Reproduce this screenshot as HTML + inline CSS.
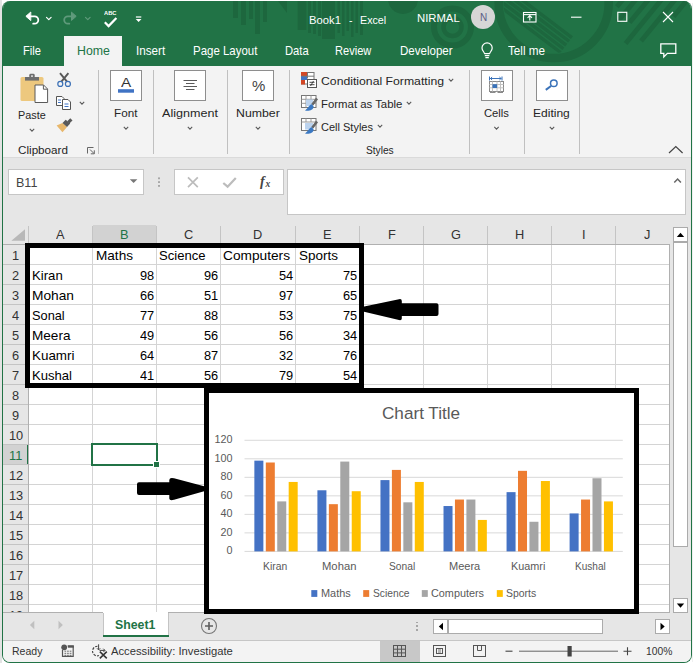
<!DOCTYPE html>
<html lang="en"><head><meta charset="utf-8"><title>Book1 - Excel</title>
<style>
html,body{margin:0;padding:0;}
body{width:695px;height:667px;background:#fff;position:relative;overflow:hidden;font-family:"Liberation Sans", sans-serif;}
#w div,#w svg{position:absolute;}
#w{position:absolute;left:0;top:0;width:695px;height:667px;overflow:hidden;}
.t{position:absolute;white-space:nowrap;transform-origin:0 0;display:block;}
</style></head><body><div id="w">
<div style="left:0px;top:0px;width:2px;height:663px;background:#e3e3e3;"></div>
<div style="left:692px;top:3px;width:1px;height:659px;background:#f0f0f0;"></div>
<div style="left:2px;top:1px;width:688px;height:661px;border:1px solid #217346;border-top:none;border-radius:8px;background:#e6e6e6;overflow:hidden;"><div style="left:-1px;top:0;width:690px;height:65px;background:#217346;"></div><svg style="left:-1px;top:0px;" width="690" height="65" viewBox="2 1 690 65"><g fill="#1d673e"><rect x="233" y="1" width="5" height="17"/><rect x="241" y="1" width="5" height="24"/><rect x="249" y="1" width="4" height="18"/><rect x="255" y="1" width="5" height="33"/><rect x="263" y="1" width="4" height="21"/><polygon points="278,1 287,1 287,13"/><rect x="297.700" y="1" width="8.600" height="29"/><rect x="308" y="1" width="3" height="32"/><rect x="313" y="1" width="3" height="33"/><rect x="318" y="1" width="3" height="35"/><rect x="322" y="1" width="13" height="38"/><rect x="337.500" y="1" width="2.500" height="32"/><rect x="342" y="1" width="2.500" height="35"/><rect x="346.500" y="1" width="2.500" height="30"/><rect x="351" y="1" width="2.500" height="36"/><rect x="355.500" y="1" width="2.500" height="32"/><rect x="360" y="1" width="3" height="34"/></g><circle cx="403" cy="-1" r="15" fill="#1d673e"/><g fill="none" stroke="#1d673e"><circle cx="452.5" cy="27" r="9" stroke-width="4.5"/><circle cx="452.5" cy="27" r="18.5" stroke-width="6"/><circle cx="553.7" cy="3" r="55" stroke-width="8.5"/></g><clipPath id="cpr"><circle cx="553.7" cy="3" r="50"/></clipPath><g stroke="#1d673e" stroke-width="3.3" clip-path="url(#cpr)"><line x1="494.8" y1="-21.0" x2="571.9" y2="37.6"/><line x1="491.9" y1="-17.3" x2="569.1" y2="41.3"/><line x1="489.1" y1="-13.5" x2="566.2" y2="45.1"/><line x1="486.3" y1="-9.8" x2="563.4" y2="48.8"/><line x1="483.4" y1="-6.1" x2="560.6" y2="52.5"/></g><g stroke="#1d673e" stroke-width="4.8"><line x1="624.1" y1="-2" x2="616.9" y2="6.8"/><line x1="637.1" y1="-2" x2="617.4" y2="22"/><line x1="649.8" y1="-2" x2="629.6" y2="22.6"/><line x1="662.8" y1="-2" x2="625.6" y2="43.4"/><line x1="676.4" y1="-2" x2="641.1" y2="41"/><line x1="688.7" y1="-2" x2="673.6" y2="16.4"/></g></svg></div>
<svg style="left:20px;top:8px;" width="130" height="24" viewBox="20 8 130 24" fill="none" stroke="#fff" stroke-linecap="round" stroke-linejoin="round"><path d="M30.500 12.300 L25.900 16.300 L30.500 20.300 Z" fill="#fff" stroke-width="1"/><path d="M29 16.300 H34.600 a3.700 3.700 0 0 1 0 7.400 H33.200" stroke-width="1.800"/><path d="M46.500 17.300 l2.300 2.300 l2.300 -2.300" stroke-width="1.200"/><g stroke="#5f9a7b"><path d="M71.800 12.400 L76.200 16.300 L71.800 20.200 Z" fill="#5f9a7b" stroke-width="1"/><path d="M73.500 16.300 H67.900 a3.700 3.700 0 0 0 0 7.400 H69.300" stroke-width="1.800"/><path d="M85.500 17.300 l2.300 2.300 l2.300 -2.300" stroke-width="1.200"/></g><path d="M104.800 22.300 l3.800 3.800 l7.800 -8" stroke-width="2.200" stroke-linecap="butt" stroke-linejoin="miter"/><path d="M135.900 17 h5.400" stroke-width="1.200" stroke-linecap="butt"/><path d="M135.700 19 h5.800 l-2.900 3.100 z" fill="#fff" stroke="none"/></svg>
<span class="t" style="left:103.60px;top:10px;font-size:6.2px;line-height:6.2px;color:#fff;font-weight:bold;transform:scaleX(0.9249);">ABC</span>
<span class="t" style="left:309.30px;top:15px;font-size:11.8px;line-height:11.8px;color:#fff;transform:scaleX(0.9536);">Book1</span>
<span class="t" style="left:348.93px;top:15px;font-size:11.8px;line-height:11.8px;color:#fff;transform:scaleX(0.9000);">-</span>
<span class="t" style="left:359.60px;top:15px;font-size:11.8px;line-height:11.8px;color:#fff;transform:scaleX(0.9079);">Excel</span>
<span class="t" style="left:416.90px;top:13px;font-size:11.8px;line-height:11.8px;color:#fff;transform:scaleX(0.9579);">NIRMAL</span>
<div style="left:471px;top:5px;width:24px;height:24px;border-radius:12px;background:#d6d6d6;"></div>
<span class="t" style="left:479.60px;top:13px;font-size:10.2px;line-height:10.2px;color:#5c5f86;transform:scaleX(0.9783);">N</span>
<svg style="left:515px;top:5px;" width="170" height="26" viewBox="515 5 170 26" fill="none" stroke="#fff" stroke-width="1.1"><rect x="523.5" y="12.5" width="12.5" height="9.5"/><path d="M523.5 14.6 h12.5" /><path d="M529.8 20.5 v-4.6 M527.6 17.8 l2.2 -2.2 l2.2 2.2"/><path d="M571 17.2 h10.5"/><rect x="617.8" y="12.3" width="9" height="9"/><path d="M663 12 l10 10 M673 12 l-10 10"/></svg>
<div style="left:64px;top:36px;width:58px;height:30px;background:#f3f3f3;"></div>
<span class="t" style="left:23.30px;top:45px;font-size:12.7px;line-height:12.7px;color:#fff;transform:scaleX(0.8752);">File</span>
<span class="t" style="left:76.80px;top:45px;font-size:12.7px;line-height:12.7px;color:#217346;transform:scaleX(0.9721);">Home</span>
<span class="t" style="left:136.00px;top:45px;font-size:12.7px;line-height:12.7px;color:#fff;transform:scaleX(0.9201);">Insert</span>
<span class="t" style="left:192.60px;top:45px;font-size:12.7px;line-height:12.7px;color:#fff;transform:scaleX(0.9039);">Page Layout</span>
<span class="t" style="left:284.50px;top:45px;font-size:12.7px;line-height:12.7px;color:#fff;transform:scaleX(0.8839);">Data</span>
<span class="t" style="left:335.20px;top:45px;font-size:12.7px;line-height:12.7px;color:#fff;transform:scaleX(0.8724);">Review</span>
<span class="t" style="left:399.60px;top:45px;font-size:12.7px;line-height:12.7px;color:#fff;transform:scaleX(0.9093);">Developer</span>
<span class="t" style="left:508.20px;top:45px;font-size:12.7px;line-height:12.7px;color:#fff;transform:scaleX(0.9232);">Tell me</span>
<svg style="left:478px;top:40px;" width="20" height="22" viewBox="478 40 20 22" fill="none" stroke="#fff" stroke-width="1.2"><path d="M484.6 53.6 c-0.4 -1.6 -2.6 -3 -2.6 -5.6 a5.1 5.1 0 0 1 10.2 0 c0 2.6 -2.2 4 -2.6 5.6 z"/><path d="M484.8 55.6 h4.6 M485.4 57.7 h3.4"/></svg>
<svg style="left:656px;top:40px;" width="24" height="22" viewBox="656 40 24 22" fill="none" stroke="#fff" stroke-width="1.3"><path d="M660.8 43.8 h15 v9.6 h-8.4 l-3.6 3.6 v-3.6 h-3 z"/></svg>
<div style="left:3px;top:66px;width:688px;height:91px;background:#f3f3f3;"></div>
<div style="left:3px;top:157px;width:688px;height:1px;background:#dadada;"></div>
<div style="left:98px;top:70px;width:1px;height:84px;background:#c0c0c0;"></div>
<div style="left:153px;top:70px;width:1px;height:84px;background:#c0c0c0;"></div>
<div style="left:227px;top:70px;width:1px;height:84px;background:#c0c0c0;"></div>
<div style="left:289px;top:70px;width:1px;height:84px;background:#c0c0c0;"></div>
<div style="left:469px;top:70px;width:1px;height:84px;background:#c0c0c0;"></div>
<div style="left:524px;top:70px;width:1px;height:84px;background:#c0c0c0;"></div>
<div style="left:579px;top:70px;width:1px;height:84px;background:#c0c0c0;"></div>
<div style="left:110px;top:70px;width:30px;height:29px;border:1px solid #8e8e8e;background:#fff;"></div>
<div style="left:174px;top:70px;width:30px;height:29px;border:1px solid #8e8e8e;background:#fff;"></div>
<div style="left:242px;top:70px;width:30px;height:29px;border:1px solid #8e8e8e;background:#fff;"></div>
<div style="left:481px;top:70px;width:30px;height:29px;border:1px solid #8e8e8e;background:#fff;"></div>
<div style="left:536px;top:70px;width:30px;height:29px;border:1px solid #8e8e8e;background:#fff;"></div>
<svg style="left:3px;top:66px;" width="688" height="92" viewBox="3 66 688 92"><rect x="20.5" y="77" width="23" height="24" rx="1.5" fill="#edc87e"/><rect x="25" y="77" width="14" height="3.600" fill="#6e6e6e"/><path d="M29.300 77.500 v-2.300 a1.400 1.400 0 0 1 1.400 -1.400 h2.600 a1.400 1.400 0 0 1 1.400 1.400 v2.300 z" fill="#6e6e6e"/><rect x="31.200" y="75.300" width="1.600" height="1.600" fill="#f3f3f3"/><path d="M35 85 h8.6 l4 4 v13.5 h-12.6 z" fill="#fff" stroke="#5a5a5a" stroke-width="1"/><path d="M43.4 85.2 v4 h4" fill="none" stroke="#5a5a5a" stroke-width="1"/><path d="M60 73.200 l7 8.400 M68.400 73.200 l-7 8.400" stroke="#585858" stroke-width="1.900" fill="none"/><circle cx="60.300" cy="83.900" r="2.500" fill="#f3f3f3" stroke="#3a6fb5" stroke-width="1.200"/><circle cx="67.900" cy="83.900" r="2.500" fill="#f3f3f3" stroke="#3a6fb5" stroke-width="1.200"/><path d="M56.5 96.5 h5.5 l2 2 v7 h-7.5 z" fill="#fff" stroke="#555" stroke-width="1"/><path d="M62.5 99.5 h5.5 l2.5 2.5 v7.5 h-8 z" fill="#fff" stroke="#555" stroke-width="1"/><path d="M58 100 h3 M58 102.5 h3 M64.5 104 h4 M64.5 106.5 h4" stroke="#3f73c4" stroke-width="1"/><path d="M79.8 101.9 l2.2 2.2 l2.2 -2.2" stroke="#5a5a5a" stroke-width="1.1" fill="none"/><polygon points="56.600,125.600 62.500,132.300 67,126.900 62.500,123" fill="#e8b76b"/><polygon points="62.500,123 67,126.900 70.200,123.600 65.700,119.800" fill="#595959"/><path d="M68.300 122.300 L71.400 119.400" stroke="#595959" stroke-width="3.200"/><path d="M87.5 153.5 v-6 h6" fill="none" stroke="#666" stroke-width="1"/><path d="M90 149.5 l4 4 M94.3 150.3 v3.5 h-3.5" fill="none" stroke="#666" stroke-width="1"/><path d="M29.8 128.9 l2.2 2.2 l2.2 -2.2" stroke="#5a5a5a" stroke-width="1.1" fill="none"/><path d="M123.8 126.9 l2.2 2.2 l2.2 -2.2" stroke="#5a5a5a" stroke-width="1.1" fill="none"/><path d="M187.8 126.9 l2.2 2.2 l2.2 -2.2" stroke="#5a5a5a" stroke-width="1.1" fill="none"/><path d="M255.8 126.9 l2.2 2.2 l2.2 -2.2" stroke="#5a5a5a" stroke-width="1.1" fill="none"/><path d="M494.3 126.9 l2.2 2.2 l2.2 -2.2" stroke="#5a5a5a" stroke-width="1.1" fill="none"/><path d="M549.8 126.9 l2.2 2.2 l2.2 -2.2" stroke="#5a5a5a" stroke-width="1.1" fill="none"/><path d="M448.8 78.9 l2.2 2.2 l2.2 -2.2" stroke="#5a5a5a" stroke-width="1.1" fill="none"/><path d="M406.8 101.9 l2.2 2.2 l2.2 -2.2" stroke="#5a5a5a" stroke-width="1.1" fill="none"/><path d="M377.8 124.9 l2.2 2.2 l2.2 -2.2" stroke="#5a5a5a" stroke-width="1.1" fill="none"/><rect x="118" y="89.2" width="16" height="3.5" fill="#3f73c4"/><path d="M183.500 80.500 h13.500 M186 83.500 h8.500 M183.500 86.500 h13.500 M186 89.500 h8.500" stroke="#5a5a5a" stroke-width="1"/><rect x="301.5" y="72.5" width="12.5" height="11.5" fill="#fff" stroke="#777" stroke-width="1"/><rect x="301" y="72" width="6" height="4" fill="#d24726"/><rect x="301" y="76" width="6" height="4" fill="#3f73c4"/><rect x="301" y="80" width="4" height="4.5" fill="#d24726"/><path d="M307.5 72.5 v6 M301.5 76.2 h12.5" stroke="#777" stroke-width="1"/><rect x="307.5" y="79.5" width="9" height="8" fill="#fff" stroke="#555" stroke-width="1"/><path d="M309.5 82.3 h5 M309.5 84.7 h5 M313.5 81 l-3 5" stroke="#333" stroke-width="0.9"/><rect x="301.5" y="95.5" width="14.500" height="12" fill="#fff" stroke="#777" stroke-width="1"/><path d="M301.5 99.300 h14.500 M301.5 103.300 h14.500 M306 95.5 v12 M311 95.5 v12" stroke="#999" stroke-width="1"/><rect x="306" y="99.500" width="7" height="6.500" fill="#bcd3ee"/><path d="M317 98.500 l-4.700 6.200" stroke="#666" stroke-width="2.600"/><path d="M311.800 104.300 c-2.500 0.300 -3.500 3.500 -6.800 6.300 c4.500 0.800 8.200 -0.800 8.700 -4.200 z" fill="#3a78c2"/><rect x="301.5" y="118.5" width="14.500" height="12" fill="#fff" stroke="#777" stroke-width="1"/><path d="M301.5 122 h14.500 M306 118.5 v3.5 M311 118.5 v3.5" stroke="#999" stroke-width="1"/><rect x="305" y="123" width="8" height="6.500" fill="#bcd3ee"/><path d="M317 121.500 l-4.700 6.200" stroke="#666" stroke-width="2.600"/><path d="M311.800 127.300 c-2.500 0.300 -3.500 3.500 -6.800 6.300 c4.500 0.800 8.200 -0.800 8.700 -4.200 z" fill="#3a78c2"/><path d="M490 78.500 h11.500 M489.500 76.500 v4 M502 76.500 v4 M490.500 78.500 l1.600 -1.500 M490.500 78.500 l1.600 1.500 M501 78.500 l-1.600 -1.500 M501 78.500 l-1.600 1.500" stroke="#3b73b9" stroke-width="1" fill="none"/><rect x="489.500" y="81.500" width="14" height="10" fill="#fff" stroke="#8a8a8a" stroke-width="1"/><path d="M489.500 84.500 h14 M489.500 87.800 h14 M492.500 81.500 v10 M497 81.500 v10 M500.500 81.500 v10" stroke="#c2c2c2" stroke-width="1"/><rect x="492.500" y="84.200" width="4.600" height="3.800" fill="#3b73b9"/><path d="M490 92.500 h5.500 M497.500 92.500 h5.500" stroke="#8a8a8a" stroke-width="1"/><circle cx="553.800" cy="83.300" r="3.300" fill="none" stroke="#3b73b9" stroke-width="1.500"/><path d="M551 86 l-5.200 3.900" stroke="#3b73b9" stroke-width="2"/><path d="M669 153 l6.800 -6.500 l6.800 6.500" fill="none" stroke="#444" stroke-width="1.200"/></svg>
<span class="t" style="left:121.20px;top:76px;font-size:13.4px;line-height:13.4px;color:#333;transform:scaleX(1.1413);">A</span>
<span class="t" style="left:251.70px;top:78px;font-size:15px;line-height:15px;color:#444;transform:scaleX(0.9967);">%</span>
<span class="t" style="left:18.40px;top:109px;font-size:11.7px;line-height:11.7px;color:#262626;transform:scaleX(0.9267);">Paste</span>
<span class="t" style="left:17.60px;top:144px;font-size:11.7px;line-height:11.7px;color:#262626;transform:scaleX(0.9994);">Clipboard</span>
<span class="t" style="left:114.40px;top:107px;font-size:11.7px;line-height:11.7px;color:#262626;transform:scaleX(1.0004);">Font</span>
<span class="t" style="left:162.10px;top:107px;font-size:11.7px;line-height:11.7px;color:#262626;transform:scaleX(1.0753);">Alignment</span>
<span class="t" style="left:236.40px;top:107px;font-size:11.7px;line-height:11.7px;color:#262626;transform:scaleX(1.0534);">Number</span>
<span class="t" style="left:320.70px;top:75px;font-size:11.7px;line-height:11.7px;color:#262626;transform:scaleX(1.0460);">Conditional Formatting</span>
<span class="t" style="left:320.70px;top:98px;font-size:11.7px;line-height:11.7px;color:#262626;transform:scaleX(0.9738);">Format as Table</span>
<span class="t" style="left:320.70px;top:121px;font-size:11.7px;line-height:11.7px;color:#262626;transform:scaleX(0.9417);">Cell Styles</span>
<span class="t" style="left:365.60px;top:144px;font-size:11.7px;line-height:11.7px;color:#262626;transform:scaleX(0.8703);">Styles</span>
<span class="t" style="left:484.30px;top:107px;font-size:11.7px;line-height:11.7px;color:#262626;transform:scaleX(0.9621);">Cells</span>
<span class="t" style="left:533.20px;top:107px;font-size:11.7px;line-height:11.7px;color:#262626;transform:scaleX(1.0294);">Editing</span>
<div style="left:8px;top:169px;width:134px;height:24px;border:1px solid #c6c6c6;background:#fff;"></div>
<div style="left:174px;top:169px;width:108px;height:24px;border:1px solid #c6c6c6;background:#fff;"></div>
<div style="left:287px;top:169px;width:397px;height:44px;border:1px solid #c6c6c6;background:#fff;"></div>
<span class="t" style="left:15.60px;top:177px;font-size:12.6px;line-height:12.6px;color:#444;transform:scaleX(0.9961);">B11</span>
<svg style="left:125px;top:170px;" width="565" height="30" viewBox="125 170 565 30"><path d="M129.800 179.300 h7.600 l-3.800 3.800 z" fill="#777"/><rect x="158.100" y="177.400" width="1.800" height="1.800" fill="#a0a0a0"/><rect x="158.100" y="181.200" width="1.800" height="1.800" fill="#a0a0a0"/><rect x="158.100" y="185" width="1.800" height="1.800" fill="#a0a0a0"/><path d="M188 177.300 l9.800 9.800 M197.800 177.300 l-9.800 9.800" stroke="#bcbcbc" stroke-width="1.700" fill="none"/><path d="M223.300 183 l4.300 3.700 l8.200 -8.800" stroke="#bcbcbc" stroke-width="2.200" fill="none"/><path d="M674.300 182.600 l3.300 -3.500 l3.300 3.500" stroke="#666" stroke-width="1.500" fill="none"/></svg>
<span class="t" style="left:260.00px;top:175px;font-size:14px;line-height:14px;color:#444;font-weight:bold;font-style:italic;font-family:Liberation Serif, serif;">f</span>
<span class="t" style="left:265.50px;top:180px;font-size:9.5px;line-height:9.5px;color:#444;font-weight:bold;font-style:italic;font-family:Liberation Serif, serif;">x</span>
<div style="left:29px;top:245px;width:641px;height:368px;background:#fff;"></div>
<div style="left:3px;top:225px;width:667px;height:19px;background:#e6e6e6;"></div>
<div style="left:3px;top:245px;width:25px;height:368px;background:#e6e6e6;"></div>
<div style="left:93px;top:225px;width:63px;height:19px;background:#d2d2d2;"></div>
<div style="left:3px;top:445px;width:25px;height:19px;background:#d2d2d2;"></div>
<div style="left:93px;top:243px;width:64px;height:2px;background:#217346;"></div>
<div style="left:27px;top:444px;width:2px;height:21px;background:#217346;"></div>
<div style="left:3px;top:244px;width:667px;height:1px;background:#b0b0b0;"></div>
<div style="left:28px;top:245px;width:1px;height:368px;background:#b0b0b0;"></div>
<div style="left:92px;top:226px;width:1px;height:18px;background:#c4c4c4;"></div>
<div style="left:92px;top:245px;width:1px;height:368px;background:#d4d4d4;"></div>
<div style="left:156px;top:226px;width:1px;height:18px;background:#c4c4c4;"></div>
<div style="left:156px;top:245px;width:1px;height:368px;background:#d4d4d4;"></div>
<div style="left:220px;top:226px;width:1px;height:18px;background:#c4c4c4;"></div>
<div style="left:220px;top:245px;width:1px;height:368px;background:#d4d4d4;"></div>
<div style="left:295px;top:226px;width:1px;height:18px;background:#c4c4c4;"></div>
<div style="left:295px;top:245px;width:1px;height:368px;background:#d4d4d4;"></div>
<div style="left:359px;top:226px;width:1px;height:18px;background:#c4c4c4;"></div>
<div style="left:359px;top:245px;width:1px;height:368px;background:#d4d4d4;"></div>
<div style="left:423px;top:226px;width:1px;height:18px;background:#c4c4c4;"></div>
<div style="left:423px;top:245px;width:1px;height:368px;background:#d4d4d4;"></div>
<div style="left:487px;top:226px;width:1px;height:18px;background:#c4c4c4;"></div>
<div style="left:487px;top:245px;width:1px;height:368px;background:#d4d4d4;"></div>
<div style="left:551px;top:226px;width:1px;height:18px;background:#c4c4c4;"></div>
<div style="left:551px;top:245px;width:1px;height:368px;background:#d4d4d4;"></div>
<div style="left:615px;top:226px;width:1px;height:18px;background:#c4c4c4;"></div>
<div style="left:615px;top:245px;width:1px;height:368px;background:#d4d4d4;"></div>
<div style="left:28px;top:226px;width:1px;height:18px;background:#c4c4c4;"></div>
<div style="left:29px;top:264px;width:641px;height:1px;background:#d4d4d4;"></div>
<div style="left:3px;top:264px;width:25px;height:1px;background:#c4c4c4;"></div>
<div style="left:29px;top:284px;width:641px;height:1px;background:#d4d4d4;"></div>
<div style="left:3px;top:284px;width:25px;height:1px;background:#c4c4c4;"></div>
<div style="left:29px;top:304px;width:641px;height:1px;background:#d4d4d4;"></div>
<div style="left:3px;top:304px;width:25px;height:1px;background:#c4c4c4;"></div>
<div style="left:29px;top:324px;width:641px;height:1px;background:#d4d4d4;"></div>
<div style="left:3px;top:324px;width:25px;height:1px;background:#c4c4c4;"></div>
<div style="left:29px;top:344px;width:641px;height:1px;background:#d4d4d4;"></div>
<div style="left:3px;top:344px;width:25px;height:1px;background:#c4c4c4;"></div>
<div style="left:29px;top:364px;width:641px;height:1px;background:#d4d4d4;"></div>
<div style="left:3px;top:364px;width:25px;height:1px;background:#c4c4c4;"></div>
<div style="left:29px;top:384px;width:641px;height:1px;background:#d4d4d4;"></div>
<div style="left:3px;top:384px;width:25px;height:1px;background:#c4c4c4;"></div>
<div style="left:29px;top:404px;width:641px;height:1px;background:#d4d4d4;"></div>
<div style="left:3px;top:404px;width:25px;height:1px;background:#c4c4c4;"></div>
<div style="left:29px;top:424px;width:641px;height:1px;background:#d4d4d4;"></div>
<div style="left:3px;top:424px;width:25px;height:1px;background:#c4c4c4;"></div>
<div style="left:29px;top:444px;width:641px;height:1px;background:#d4d4d4;"></div>
<div style="left:3px;top:444px;width:25px;height:1px;background:#c4c4c4;"></div>
<div style="left:29px;top:464px;width:641px;height:1px;background:#d4d4d4;"></div>
<div style="left:3px;top:464px;width:25px;height:1px;background:#c4c4c4;"></div>
<div style="left:29px;top:484px;width:641px;height:1px;background:#d4d4d4;"></div>
<div style="left:3px;top:484px;width:25px;height:1px;background:#c4c4c4;"></div>
<div style="left:29px;top:504px;width:641px;height:1px;background:#d4d4d4;"></div>
<div style="left:3px;top:504px;width:25px;height:1px;background:#c4c4c4;"></div>
<div style="left:29px;top:524px;width:641px;height:1px;background:#d4d4d4;"></div>
<div style="left:3px;top:524px;width:25px;height:1px;background:#c4c4c4;"></div>
<div style="left:29px;top:544px;width:641px;height:1px;background:#d4d4d4;"></div>
<div style="left:3px;top:544px;width:25px;height:1px;background:#c4c4c4;"></div>
<div style="left:29px;top:564px;width:641px;height:1px;background:#d4d4d4;"></div>
<div style="left:3px;top:564px;width:25px;height:1px;background:#c4c4c4;"></div>
<div style="left:29px;top:584px;width:641px;height:1px;background:#d4d4d4;"></div>
<div style="left:3px;top:584px;width:25px;height:1px;background:#c4c4c4;"></div>
<div style="left:29px;top:604px;width:641px;height:1px;background:#d4d4d4;"></div>
<div style="left:3px;top:604px;width:25px;height:1px;background:#c4c4c4;"></div>
<div style="left:669px;top:245px;width:1px;height:368px;background:#b0b0b0;"></div>
<svg style="left:10px;top:227px;" width="16" height="16" viewBox="10 227 16 16"><path d="M25 229.300 v11.400 h-13.600 z" fill="#b8b8b8"/></svg>
<span class="t" style="left:56.23px;top:228px;font-size:13.2px;line-height:13.2px;color:#333;transform:scaleX(0.9700);">A</span>
<span class="t" style="left:120.23px;top:228px;font-size:13.2px;line-height:13.2px;color:#217346;transform:scaleX(0.9700);">B</span>
<span class="t" style="left:183.88px;top:228px;font-size:13.2px;line-height:13.2px;color:#333;transform:scaleX(0.9700);">C</span>
<span class="t" style="left:253.38px;top:228px;font-size:13.2px;line-height:13.2px;color:#333;transform:scaleX(0.9700);">D</span>
<span class="t" style="left:323.23px;top:228px;font-size:13.2px;line-height:13.2px;color:#333;transform:scaleX(0.9700);">E</span>
<span class="t" style="left:387.59px;top:228px;font-size:13.2px;line-height:13.2px;color:#333;transform:scaleX(0.9700);">F</span>
<span class="t" style="left:450.52px;top:228px;font-size:13.2px;line-height:13.2px;color:#333;transform:scaleX(0.9700);">G</span>
<span class="t" style="left:514.88px;top:228px;font-size:13.2px;line-height:13.2px;color:#333;transform:scaleX(0.9700);">H</span>
<span class="t" style="left:581.72px;top:228px;font-size:13.2px;line-height:13.2px;color:#333;transform:scaleX(0.9700);">I</span>
<span class="t" style="left:644.30px;top:228px;font-size:13.2px;line-height:13.2px;color:#333;transform:scaleX(0.9700);">J</span>
<span class="t" style="left:12.44px;top:249px;font-size:13.2px;line-height:13.2px;color:#333;transform:scaleX(0.9700);">1</span>
<span class="t" style="left:12.44px;top:269px;font-size:13.2px;line-height:13.2px;color:#333;transform:scaleX(0.9700);">2</span>
<span class="t" style="left:12.44px;top:289px;font-size:13.2px;line-height:13.2px;color:#333;transform:scaleX(0.9700);">3</span>
<span class="t" style="left:12.44px;top:309px;font-size:13.2px;line-height:13.2px;color:#333;transform:scaleX(0.9700);">4</span>
<span class="t" style="left:12.44px;top:329px;font-size:13.2px;line-height:13.2px;color:#333;transform:scaleX(0.9700);">5</span>
<span class="t" style="left:12.44px;top:349px;font-size:13.2px;line-height:13.2px;color:#333;transform:scaleX(0.9700);">6</span>
<span class="t" style="left:12.44px;top:369px;font-size:13.2px;line-height:13.2px;color:#333;transform:scaleX(0.9700);">7</span>
<span class="t" style="left:12.44px;top:389px;font-size:13.2px;line-height:13.2px;color:#333;transform:scaleX(0.9700);">8</span>
<span class="t" style="left:12.44px;top:409px;font-size:13.2px;line-height:13.2px;color:#333;transform:scaleX(0.9700);">9</span>
<span class="t" style="left:8.88px;top:429px;font-size:13.2px;line-height:13.2px;color:#333;transform:scaleX(0.9700);">10</span>
<span class="t" style="left:9.35px;top:449px;font-size:13.2px;line-height:13.2px;color:#217346;transform:scaleX(0.9700);">11</span>
<span class="t" style="left:8.88px;top:469px;font-size:13.2px;line-height:13.2px;color:#333;transform:scaleX(0.9700);">12</span>
<span class="t" style="left:8.88px;top:489px;font-size:13.2px;line-height:13.2px;color:#333;transform:scaleX(0.9700);">13</span>
<span class="t" style="left:8.88px;top:509px;font-size:13.2px;line-height:13.2px;color:#333;transform:scaleX(0.9700);">14</span>
<span class="t" style="left:8.88px;top:529px;font-size:13.2px;line-height:13.2px;color:#333;transform:scaleX(0.9700);">15</span>
<span class="t" style="left:8.88px;top:549px;font-size:13.2px;line-height:13.2px;color:#333;transform:scaleX(0.9700);">16</span>
<span class="t" style="left:8.88px;top:569px;font-size:13.2px;line-height:13.2px;color:#333;transform:scaleX(0.9700);">17</span>
<span class="t" style="left:8.88px;top:589px;font-size:13.2px;line-height:13.2px;color:#333;transform:scaleX(0.9700);">18</span>
<span class="t" style="left:8.88px;top:609px;font-size:13.2px;line-height:13.2px;color:#333;transform:scaleX(0.9700);">19</span>
<span class="t" style="left:95.70px;top:249px;font-size:13.2px;line-height:13.2px;color:#000;transform:scaleX(1.0300);">Maths</span>
<span class="t" style="left:159.30px;top:249px;font-size:13.2px;line-height:13.2px;color:#000;transform:scaleX(0.9910);">Science</span>
<span class="t" style="left:223.00px;top:249px;font-size:13.2px;line-height:13.2px;color:#000;transform:scaleX(1.0388);">Computers</span>
<span class="t" style="left:298.60px;top:249px;font-size:13.2px;line-height:13.2px;color:#000;transform:scaleX(1.0230);">Sports</span>
<span class="t" style="left:31.50px;top:269px;font-size:13.2px;line-height:13.2px;color:#000;transform:scaleX(0.9969);">Kiran</span>
<span class="t" style="left:139.97px;top:269px;font-size:13.2px;line-height:13.2px;color:#000;transform:scaleX(0.9700);">98</span>
<span class="t" style="left:203.97px;top:269px;font-size:13.2px;line-height:13.2px;color:#000;transform:scaleX(0.9700);">96</span>
<span class="t" style="left:278.97px;top:269px;font-size:13.2px;line-height:13.2px;color:#000;transform:scaleX(0.9700);">54</span>
<span class="t" style="left:342.97px;top:269px;font-size:13.2px;line-height:13.2px;color:#000;transform:scaleX(0.9700);">75</span>
<span class="t" style="left:31.50px;top:289px;font-size:13.2px;line-height:13.2px;color:#000;transform:scaleX(1.0415);">Mohan</span>
<span class="t" style="left:139.97px;top:289px;font-size:13.2px;line-height:13.2px;color:#000;transform:scaleX(0.9700);">66</span>
<span class="t" style="left:203.97px;top:289px;font-size:13.2px;line-height:13.2px;color:#000;transform:scaleX(0.9700);">51</span>
<span class="t" style="left:278.97px;top:289px;font-size:13.2px;line-height:13.2px;color:#000;transform:scaleX(0.9700);">97</span>
<span class="t" style="left:342.97px;top:289px;font-size:13.2px;line-height:13.2px;color:#000;transform:scaleX(0.9700);">65</span>
<span class="t" style="left:31.50px;top:309px;font-size:13.2px;line-height:13.2px;color:#000;transform:scaleX(0.9693);">Sonal</span>
<span class="t" style="left:139.97px;top:309px;font-size:13.2px;line-height:13.2px;color:#000;transform:scaleX(0.9700);">77</span>
<span class="t" style="left:203.97px;top:309px;font-size:13.2px;line-height:13.2px;color:#000;transform:scaleX(0.9700);">88</span>
<span class="t" style="left:278.97px;top:309px;font-size:13.2px;line-height:13.2px;color:#000;transform:scaleX(0.9700);">53</span>
<span class="t" style="left:342.97px;top:309px;font-size:13.2px;line-height:13.2px;color:#000;transform:scaleX(0.9700);">75</span>
<span class="t" style="left:31.50px;top:329px;font-size:13.2px;line-height:13.2px;color:#000;transform:scaleX(1.0297);">Meera</span>
<span class="t" style="left:139.97px;top:329px;font-size:13.2px;line-height:13.2px;color:#000;transform:scaleX(0.9700);">49</span>
<span class="t" style="left:203.97px;top:329px;font-size:13.2px;line-height:13.2px;color:#000;transform:scaleX(0.9700);">56</span>
<span class="t" style="left:278.97px;top:329px;font-size:13.2px;line-height:13.2px;color:#000;transform:scaleX(0.9700);">56</span>
<span class="t" style="left:342.97px;top:329px;font-size:13.2px;line-height:13.2px;color:#000;transform:scaleX(0.9700);">34</span>
<span class="t" style="left:31.50px;top:349px;font-size:13.2px;line-height:13.2px;color:#000;transform:scaleX(1.0172);">Kuamri</span>
<span class="t" style="left:139.97px;top:349px;font-size:13.2px;line-height:13.2px;color:#000;transform:scaleX(0.9700);">64</span>
<span class="t" style="left:203.97px;top:349px;font-size:13.2px;line-height:13.2px;color:#000;transform:scaleX(0.9700);">87</span>
<span class="t" style="left:278.97px;top:349px;font-size:13.2px;line-height:13.2px;color:#000;transform:scaleX(0.9700);">32</span>
<span class="t" style="left:342.97px;top:349px;font-size:13.2px;line-height:13.2px;color:#000;transform:scaleX(0.9700);">76</span>
<span class="t" style="left:31.50px;top:369px;font-size:13.2px;line-height:13.2px;color:#000;transform:scaleX(0.9919);">Kushal</span>
<span class="t" style="left:139.97px;top:369px;font-size:13.2px;line-height:13.2px;color:#000;transform:scaleX(0.9700);">41</span>
<span class="t" style="left:203.97px;top:369px;font-size:13.2px;line-height:13.2px;color:#000;transform:scaleX(0.9700);">56</span>
<span class="t" style="left:278.97px;top:369px;font-size:13.2px;line-height:13.2px;color:#000;transform:scaleX(0.9700);">79</span>
<span class="t" style="left:342.97px;top:369px;font-size:13.2px;line-height:13.2px;color:#000;transform:scaleX(0.9700);">54</span>
<div style="left:91px;top:443px;width:63px;height:19px;border:2px solid #217346;"></div>
<div style="left:153px;top:461px;width:5px;height:5px;background:#217346;border:1px solid #fff;"></div>
<div style="left:671px;top:225px;width:20px;height:388px;background:#e6e6e6;"></div>
<div style="left:673px;top:227px;width:13px;height:13px;border:1px solid #ababab;background:#fff;"></div>
<div style="left:673px;top:242px;width:13px;height:303px;border:1px solid #ababab;background:#fff;"></div>
<div style="left:673px;top:598px;width:13px;height:13px;border:1px solid #ababab;background:#fff;"></div>
<svg style="left:673px;top:227px;" width="15" height="386" viewBox="673 227 15 386"><path d="M676.800 237 h7.400 l-3.700 -4.200 z" fill="#000"/><path d="M676.800 603.500 h7.400 l-3.700 4.200 z" fill="#000"/></svg>
<div style="left:3px;top:613px;width:688px;height:27px;background:#e6e6e6;"></div>
<div style="left:3px;top:612px;width:667px;height:1px;background:#b0b0b0;"></div>
<div style="left:103px;top:612px;width:65px;height:23px;background:#fff;"></div>
<div style="left:25px;top:243px;width:329px;height:135px;border:5px solid #000;"></div>
<div style="left:204px;top:388px;width:425px;height:216px;border:5px solid #000;background:#fff;"></div>
<svg style="left:209px;top:393px;" width="425" height="216" viewBox="209 393 425 216"><rect x="244.5" y="550.90" width="378.3" height="1" fill="#d9d9d9"/><rect x="244.5" y="532.38" width="378.3" height="1" fill="#d9d9d9"/><rect x="244.5" y="513.86" width="378.3" height="1" fill="#d9d9d9"/><rect x="244.5" y="495.34" width="378.3" height="1" fill="#d9d9d9"/><rect x="244.5" y="476.82" width="378.3" height="1" fill="#d9d9d9"/><rect x="244.5" y="458.30" width="378.3" height="1" fill="#d9d9d9"/><rect x="244.5" y="439.78" width="378.3" height="1" fill="#d9d9d9"/><rect x="254.36" y="460.65" width="9.01" height="90.75" fill="#4472c4"/><rect x="265.80" y="462.50" width="9.01" height="88.90" fill="#ed7d31"/><rect x="277.24" y="501.40" width="9.01" height="50.00" fill="#a5a5a5"/><rect x="288.68" y="481.95" width="9.01" height="69.45" fill="#ffc000"/><rect x="317.41" y="490.28" width="9.01" height="61.12" fill="#4472c4"/><rect x="328.85" y="504.17" width="9.01" height="47.23" fill="#ed7d31"/><rect x="340.29" y="461.58" width="9.01" height="89.82" fill="#a5a5a5"/><rect x="351.73" y="491.21" width="9.01" height="60.19" fill="#ffc000"/><rect x="380.46" y="480.10" width="9.01" height="71.30" fill="#4472c4"/><rect x="391.90" y="469.91" width="9.01" height="81.49" fill="#ed7d31"/><rect x="403.34" y="502.32" width="9.01" height="49.08" fill="#a5a5a5"/><rect x="414.78" y="481.95" width="9.01" height="69.45" fill="#ffc000"/><rect x="443.51" y="506.03" width="9.01" height="45.37" fill="#4472c4"/><rect x="454.95" y="499.54" width="9.01" height="51.86" fill="#ed7d31"/><rect x="466.39" y="499.54" width="9.01" height="51.86" fill="#a5a5a5"/><rect x="477.83" y="519.92" width="9.01" height="31.48" fill="#ffc000"/><rect x="506.56" y="492.14" width="9.01" height="59.26" fill="#4472c4"/><rect x="518.00" y="470.84" width="9.01" height="80.56" fill="#ed7d31"/><rect x="529.44" y="521.77" width="9.01" height="29.63" fill="#a5a5a5"/><rect x="540.88" y="481.02" width="9.01" height="70.38" fill="#ffc000"/><rect x="569.61" y="513.43" width="9.01" height="37.97" fill="#4472c4"/><rect x="581.05" y="499.54" width="9.01" height="51.86" fill="#ed7d31"/><rect x="592.49" y="478.25" width="9.01" height="73.15" fill="#a5a5a5"/><rect x="603.93" y="501.40" width="9.01" height="50.00" fill="#ffc000"/><rect x="311.3" y="590.100" width="6" height="6.800" fill="#4472c4"/><rect x="363.2" y="590.100" width="6" height="6.800" fill="#ed7d31"/><rect x="421.8" y="590.100" width="6" height="6.800" fill="#a5a5a5"/><rect x="496.8" y="590.100" width="6" height="6.800" fill="#ffc000"/></svg>
<span class="t" style="left:382.30px;top:406px;font-size:16.8px;line-height:16.8px;color:#595959;transform:scaleX(1.0211);">Chart Title</span>
<span class="t" style="left:226.58px;top:545px;font-size:10.8px;line-height:10.8px;color:#595959;">0</span>
<span class="t" style="left:220.58px;top:527px;font-size:10.8px;line-height:10.8px;color:#595959;">20</span>
<span class="t" style="left:220.58px;top:508px;font-size:10.8px;line-height:10.8px;color:#595959;">40</span>
<span class="t" style="left:220.58px;top:490px;font-size:10.8px;line-height:10.8px;color:#595959;">60</span>
<span class="t" style="left:220.58px;top:471px;font-size:10.8px;line-height:10.8px;color:#595959;">80</span>
<span class="t" style="left:214.58px;top:453px;font-size:10.8px;line-height:10.8px;color:#595959;">100</span>
<span class="t" style="left:214.58px;top:434px;font-size:10.8px;line-height:10.8px;color:#595959;">120</span>
<span class="t" style="left:263.40px;top:561px;font-size:10.8px;line-height:10.8px;color:#595959;transform:scaleX(0.9596);">Kiran</span>
<span class="t" style="left:321.60px;top:561px;font-size:10.8px;line-height:10.8px;color:#595959;transform:scaleX(1.0419);">Mohan</span>
<span class="t" style="left:388.50px;top:561px;font-size:10.8px;line-height:10.8px;color:#595959;transform:scaleX(0.9484);">Sonal</span>
<span class="t" style="left:448.70px;top:561px;font-size:10.8px;line-height:10.8px;color:#595959;transform:scaleX(1.0193);">Meera</span>
<span class="t" style="left:510.70px;top:561px;font-size:10.8px;line-height:10.8px;color:#595959;transform:scaleX(1.0028);">Kuamri</span>
<span class="t" style="left:575.20px;top:561px;font-size:10.8px;line-height:10.8px;color:#595959;transform:scaleX(0.9329);">Kushal</span>
<span class="t" style="left:320.90px;top:588px;font-size:10.8px;line-height:10.8px;color:#595959;transform:scaleX(1.0100);">Maths</span>
<span class="t" style="left:372.60px;top:588px;font-size:10.8px;line-height:10.8px;color:#595959;transform:scaleX(0.9500);">Science</span>
<span class="t" style="left:431.00px;top:588px;font-size:10.8px;line-height:10.8px;color:#595959;transform:scaleX(1.0036);">Computers</span>
<span class="t" style="left:506.00px;top:588px;font-size:10.8px;line-height:10.8px;color:#595959;transform:scaleX(0.9674);">Sports</span>
<svg style="left:130px;top:290px;" width="320" height="220" viewBox="130 290 320 220"><path d="M363 306.800 L399 299.200 Q401.800 298.600 401.800 301 V303.200 H436.500 Q438.500 303.200 438.500 305.200 V314 Q438.500 316 436.500 316 H401.800 V318.400 Q401.800 320.600 399 320 L363 311.600 Z" fill="#000"/><path d="M205 491 L174 499.800 Q169.500 501 169.300 498.500 V495 H139 Q137 495 137 493 V484.300 Q137 482.300 139 482.300 H169.300 V480 Q169.500 477.200 174 478.300 L205 486.500 Z" fill="#000"/></svg>
<div style="left:103px;top:612px;width:65px;height:23px;background:#fff;"></div>
<div style="left:103px;top:613px;width:1px;height:22px;background:#c4c4c4;"></div>
<div style="left:168px;top:613px;width:1px;height:22px;background:#c4c4c4;"></div>
<div style="left:103px;top:634.5px;width:66px;height:2.2px;background:#217346;"></div>
<span class="t" style="left:115.00px;top:619px;font-size:12.4px;line-height:12.4px;color:#217346;font-weight:bold;transform:scaleX(0.9941);">Sheet1</span>
<svg style="left:20px;top:614px;" width="200" height="24" viewBox="20 614 200 24"><path d="M34.300 620.800 v8.400 l-4.400 -4.200 z" fill="#c0c0c0"/><path d="M58.500 620.800 v8.400 l4.400 -4.200 z" fill="#c0c0c0"/><circle cx="209" cy="626" r="7.500" fill="none" stroke="#777" stroke-width="1.100"/><path d="M205 626 h8 M209 622 v8" stroke="#5e5e5e" stroke-width="1.600"/></svg>
<svg style="left:430px;top:616px;" width="245" height="22" viewBox="430 616 245 22"><rect x="416.500" y="620.800" width="1.400" height="1.400" fill="#aaa"/></svg>
<div style="left:416.3px;top:621.5px;width:1.5px;height:1.5px;background:#a6a6a6;"></div>
<div style="left:416.3px;top:625.3px;width:1.5px;height:1.5px;background:#a6a6a6;"></div>
<div style="left:416.3px;top:629.1px;width:1.5px;height:1.5px;background:#a6a6a6;"></div>
<div style="left:433px;top:619px;width:13px;height:13px;border:1px solid #ababab;background:#fff;"></div>
<div style="left:448px;top:619px;width:153px;height:13px;border:1px solid #ababab;background:#fff;"></div>
<div style="left:655px;top:619px;width:13px;height:13px;border:1px solid #ababab;background:#fff;"></div>
<svg style="left:433px;top:619px;" width="240" height="15" viewBox="433 619 240 15"><path d="M443 622.800 v7.400 l-4.200 -3.700 z" fill="#000"/><path d="M660.500 622.800 v7.400 l4.200 -3.700 z" fill="#000"/></svg>
<div style="left:3px;top:640px;width:688px;height:1px;background:#c6c6c6;"></div>
<div style="left:3px;top:641px;width:688px;height:21px;background:#f3f3f3;border-radius:0 0 7px 7px;"></div>
<span class="t" style="left:11.60px;top:646px;font-size:10.6px;line-height:10.6px;color:#333;transform:scaleX(0.9927);">Ready</span>
<span class="t" style="left:111.20px;top:646px;font-size:10.6px;line-height:10.6px;color:#333;transform:scaleX(1.0607);">Accessibility: Investigate</span>
<span class="t" style="left:645.60px;top:646px;font-size:10.6px;line-height:10.6px;color:#333;transform:scaleX(0.9738);">100%</span>
<div style="left:380px;top:641px;width:40px;height:21px;background:#c8c8c8;"></div>
<svg style="left:55px;top:641px;" width="580" height="21" viewBox="55 641 580 21"><path d="M67.500 646 h5.700 v10.300 h-10.700 v-6.300" fill="none" stroke="#555" stroke-width="1.200"/><rect x="68" y="645.400" width="5.800" height="2.300" fill="#555"/><circle cx="64.200" cy="647.300" r="2.900" fill="#555"/><path d="M64.500 651.200 h7.500 M64.500 653.300 h7.500 M64.500 655.300 h7.500" stroke="#666" stroke-width="1" stroke-dasharray="1.700 0.900"/><path d="M97.500 646.300 a4.800 4.800 0 1 0 1.500 9.300" fill="none" stroke="#444" stroke-width="1.100" stroke-dasharray="2.400 1.200"/><path d="M98.600 644.300 v5.400 M97 648.300 l1.600 1.600 l1.600 -1.600 M99.500 650.400 h5.300 M103.300 648.700 l1.700 1.700 l-1.700 1.700" fill="none" stroke="#444" stroke-width="1"/><path d="M99.800 651.600 l7 6.800 M106.800 651.600 l-7 6.800" stroke="#333" stroke-width="1.500"/><rect x="393.500" y="645.500" width="12" height="11" fill="none" stroke="#555" stroke-width="1"/><path d="M393.500 649.200 h12 M393.500 652.900 h12 M397.500 645.500 v11 M401.500 645.500 v11" stroke="#555" stroke-width="1"/><rect x="433.500" y="645.500" width="12" height="11" fill="none" stroke="#555" stroke-width="1"/><rect x="436.500" y="648.500" width="6" height="5" fill="none" stroke="#555" stroke-width="1"/><path d="M438 650 h3 M438 652 h3" stroke="#555" stroke-width="0.800"/><rect x="473.500" y="645.500" width="12" height="11" fill="none" stroke="#555" stroke-width="1"/><path d="M477.500 645.500 v5 h4 v-5" fill="none" stroke="#555" stroke-width="1"/><path d="M505.500 651.200 h7" stroke="#444" stroke-width="1.100"/><path d="M519 651.200 h99" stroke="#666" stroke-width="1"/><rect x="567.500" y="646" width="4.200" height="10.500" fill="#444"/><path d="M623.500 651.200 h8 M627.500 647.200 v8" stroke="#444" stroke-width="1.100"/></svg>
</div></body></html>
